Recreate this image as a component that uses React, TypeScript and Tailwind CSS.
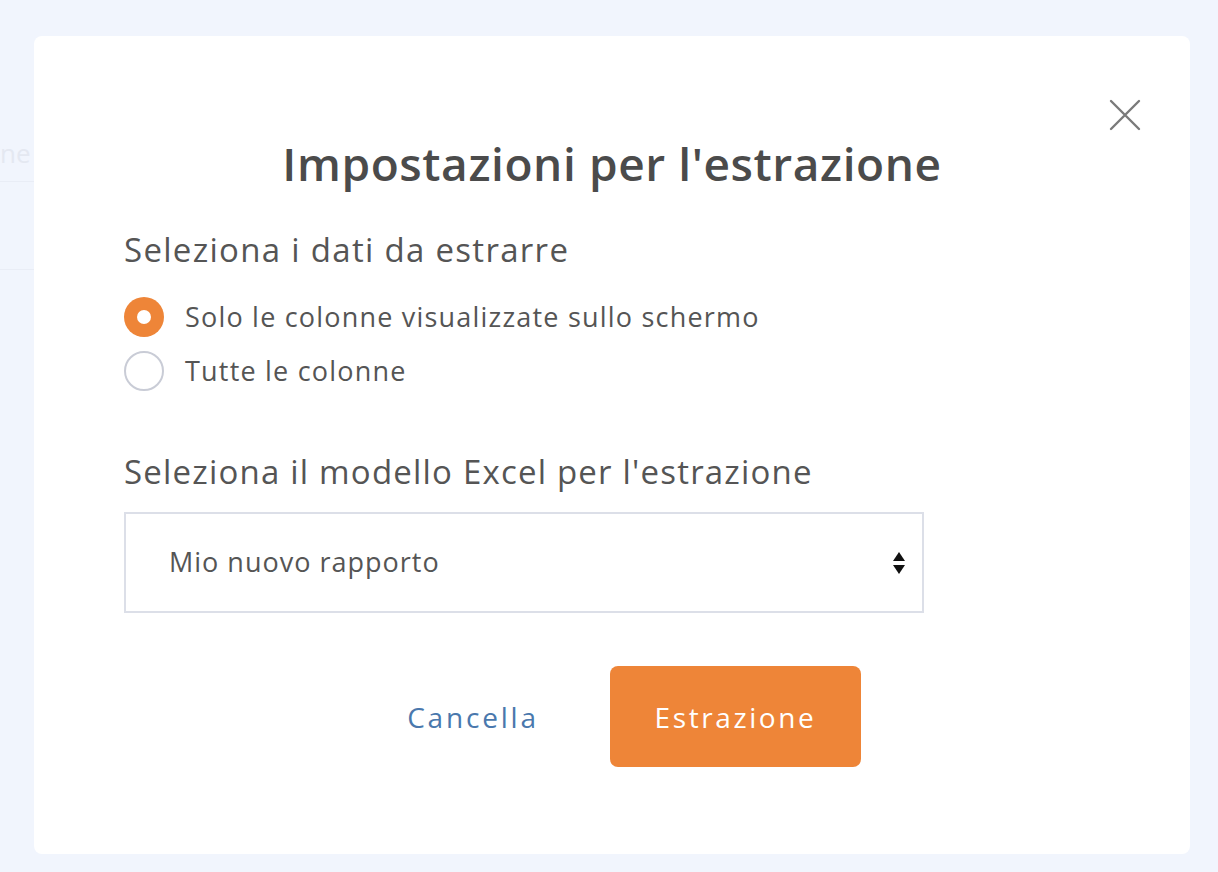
import { useState } from "react";

const font = { fontFamily: "'Open Sans', 'Noto Sans', sans-serif" };

const Radio = ({ checked, label, onClick }: { checked: boolean; label: string; onClick: () => void }) => {
    return (
        <button type="button" onClick={onClick} className="flex items-center gap-[21px] h-[54px] text-left">
            {checked ? (
                <span className="w-[40px] h-[40px] rounded-full bg-[#ee8538] flex items-center justify-center">
                    <span className="w-[14px] h-[14px] rounded-full bg-white" />
                </span>
            ) : (
                <span className="w-[40px] h-[40px] rounded-full border-2 border-[#c9ccd6] bg-white" />
            )}
            <span className="text-[27px] text-[#555555] tracking-[1.2px]">{label}</span>
        </button>
    );
};

export default function App() {
    const [mode, setMode] = useState("screen");

    return (
        <div style={font} className="relative h-[872px] bg-[#f1f5fd] pt-[36px] pl-[34px] pr-[28px] overflow-hidden">
            <div className="absolute left-0 top-[134px] text-[26px] text-[#e4e8f1]">ne</div>
            <div className="absolute left-0 top-[181px] w-[34px] h-px bg-[#e9edf6]" />
            <div className="absolute left-0 top-[269px] w-[34px] h-px bg-[#e9edf6]" />

            <div className="relative w-[1156px] h-[818px] bg-white rounded-[8px] pl-[90px] pr-[90px]">
                <button type="button" className="absolute top-[62px] right-[48px] w-[34px] h-[34px] flex items-center justify-center">
                    <svg width="34" height="34" viewBox="0 0 34 34" fill="none" stroke="#7a7a7a" strokeWidth="2.4" strokeLinecap="round">
                        <path d="M3 3 L31 31 M31 3 L3 31" />
                    </svg>
                </button>

                <h1 className="pt-[100px] text-center text-[46px] leading-[54px] font-semibold text-[#4b4b4b] tracking-[0.6px]">
                    Impostazioni per l'estrazione
                </h1>

                <h2 className="mt-[42px] text-[33px] leading-[36px] font-medium text-[#555555] tracking-[1.3px]">
                    Seleziona i dati da estrarre
                </h2>

                <div className="mt-[22px] flex flex-col">
                    <Radio checked={mode === "screen"} label="Solo le colonne visualizzate sullo schermo" onClick={() => setMode("screen")} />
                    <Radio checked={mode === "all"} label="Tutte le colonne" onClick={() => setMode("all")} />
                </div>

                <h2 className="mt-[56px] text-[33px] leading-[36px] font-medium text-[#555555] tracking-[1.2px]">
                    Seleziona il modello Excel per l'estrazione
                </h2>

                <div className="mt-[22px] w-[800px] h-[101px] border-2 border-[#dcdfe8] flex items-center justify-between pl-[43px] pr-[16px]">
                    <span className="text-[27px] text-[#555555] tracking-[1px]">Mio nuovo rapporto</span>
                    <svg width="14" height="26" viewBox="0 0 14 26" fill="#111">
                        <path d="M7 2 L13 11 L1 11 Z" />
                        <path d="M1 15 L13 15 L7 24 Z" />
                    </svg>
                </div>

                <div className="mt-[53px] flex justify-center gap-[27px]">
                    <button type="button" className="w-[220px] h-[101px] text-[28px] text-[#4a78ad] tracking-[2.8px]">
                        Cancella
                    </button>
                    <button type="button" className="w-[251px] h-[101px] rounded-[8px] bg-[#ee8538] text-white text-[28px] tracking-[2.6px]">
                        Estrazione
                    </button>
                </div>
            </div>
        </div>
    );
}
